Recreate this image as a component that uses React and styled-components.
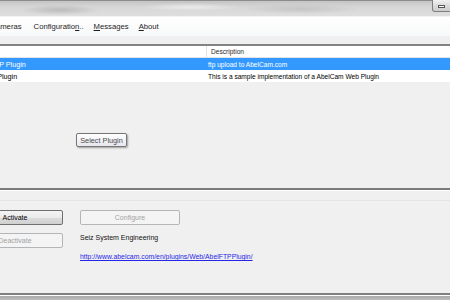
import styled, { createGlobalStyle } from "styled-components"

const GlobalStyle = createGlobalStyle`
    html, body {
        margin: 0;
        padding: 0;
        background: #f0f0f0;
    }
    body {
        font-family: "Liberation Sans", Arial, sans-serif;
        overflow: hidden;
    }
`

const Window = styled.div`
    width: 450px;
    height: 300px;
    overflow: hidden;
    display: flex;
    flex-direction: column;
    background: #f0f0f0;
`

const TitleBar = styled.div`
    height: 15px;
    flex-shrink: 0;
    display: flex;
    justify-content: flex-end;
    border-top: 1px solid #8c8c8c;
    background:
        radial-gradient(ellipse 40px 5px at 60px 9px, rgba(150, 150, 150, 0.45), transparent),
        radial-gradient(ellipse 50px 4px at 190px 6px, rgba(255, 255, 255, 0.5), transparent),
        radial-gradient(ellipse 60px 5px at 300px 8px, rgba(160, 160, 160, 0.35), transparent),
        linear-gradient(#c4c4c4, #d7d7d7 40%, #dedede);
`

const MinButton = styled.div`
    width: 24px;
    height: 12px;
    margin-right: -6px;
    margin-top: -1px;
    border: 1px solid #7e7e7e;
    border-top: none;
    border-bottom-left-radius: 3px;
    background: linear-gradient(#f2f2f2, #dcdcdc 50%, #cdcdcd);
    display: flex;
    align-items: flex-end;
    padding: 0 0 3px 5px;
    box-sizing: border-box;
    span {
        display: block;
        width: 7px;
        height: 3px;
        box-sizing: border-box;
        border: 1px solid #555;
        background: #fff;
    }
`

const Body = styled.div`
    flex: 1;
    display: flex;
    flex-direction: column;
    margin-left: -37px;
    width: 487px;
    min-height: 0;
`

const MenuBar = styled.div`
    height: 19px;
    flex-shrink: 0;
    display: flex;
    align-items: center;
    gap: 10px;
    padding-left: 5px;
    background: linear-gradient(#ffffff, #f7f8f9);
    border-top: 1px solid #f4f4f4;
    font-size: 7.7px;
    color: #1e1e1e;
`

const MenuItem = styled.span`
    margin-right: ${p => p.$extra || 0}px;
    u {
        text-decoration: underline;
    }
`

const Gap = styled.div`
    height: 8px;
    flex-shrink: 0;
`

const List = styled.div`
    border-top: 2px solid #838383;
    background: #ffffff;
    font-size: 6.6px;
    color: #111;
    flex-shrink: 0;
`

const Row = styled.div`
    display: grid;
    grid-template-columns: 244px 1fr;
    height: ${p => (p.$header ? "11px" : "12px")};
    align-items: center;
    background: ${p => (p.$selected ? "#3399ff" : "#ffffff")};
    color: ${p => (p.$selected ? "#ffffff" : p.$header ? "#2b2b2b" : "#000")};
    border-bottom: ${p => (p.$header ? "1px solid #e3e3e3" : "none")};
`

const Cell = styled.div`
    height: 100%;
    display: flex;
    align-items: center;
    padding-left: ${p => p.$pad || 4}px;
    white-space: nowrap;
    overflow: hidden;
    border-right: ${p => (p.$divider ? "1px solid #e3e3e3" : "none")};
    box-sizing: border-box;
`

const NameCell = styled(Cell)`
    font-size: 7.2px;
`

const EmptyArea = styled.div`
    flex: 1;
    position: relative;
    background: #f0f0f0;
`

const Tooltip = styled.div`
    position: absolute;
    left: 113px;
    top: 51px;
    width: 51px;
    height: 14px;
    box-sizing: border-box;
    border: 1px solid #767676;
    border-radius: 2px;
    background: linear-gradient(#ffffff, #e6e7ef);
    box-shadow: 1px 1px 2px rgba(0, 0, 0, 0.35);
    font-size: 7.3px;
    color: #4a4a4a;
    display: flex;
    align-items: center;
    justify-content: center;
`

const Separator = styled.div`
    height: 2px;
    flex-shrink: 0;
    background: #7b7b7b;
    border-bottom: 1px solid #ffffff;
`

const Panel = styled.div`
    height: 102px;
    flex-shrink: 0;
    display: flex;
    flex-direction: column;
`

const PanelTop = styled.div`
    height: 9px;
    border-bottom: 1px solid #e2e7e2;
`

const PanelGrid = styled.div`
    display: grid;
    grid-template-columns: 96px 1fr;
    column-gap: 17px;
    row-gap: 8px;
    padding-top: 9px;
    padding-left: 4px;
    font-size: 7px;
    color: #111;
`

const Button = styled.div`
    width: ${p => (p.$wide ? "100px" : "96px")};
    height: 15px;
    box-sizing: border-box;
    border: 1px solid ${p => (p.disabled ? "#b3b6b8" : "#707070")};
    border-radius: 2px;
    background: ${p => (p.disabled
        ? "#f4f4f4"
        : "linear-gradient(#f3f3f3, #ebebeb 50%, #dddddd 50%, #cfcfcf)")};
    color: ${p => (p.disabled ? "#a3a3a3" : "#000")};
    font-size: 7px;
    display: flex;
    align-items: center;
    justify-content: center;
`

const Info = styled.div`
    display: flex;
    flex-direction: column;
    gap: 11px;
    padding-top: 1px;
`

const Company = styled.div`
    height: 8px;
    line-height: 8px;
`

const Link = styled.a`
    color: #2626e8;
    text-decoration: underline;
    font-size: 6.85px;
    white-space: nowrap;
`

const BottomEdge = styled.div`
    height: 5px;
    flex-shrink: 0;
    border-top: 2px solid #7f7f7f;
    background: linear-gradient(#ffffff 1px, #a9a9a9 1px, #bdbdbd);
`

function App() {
    return (
        <>
            <GlobalStyle />
            <Window>
                <TitleBar>
                    <MinButton><span /></MinButton>
                </TitleBar>
                <Body>
                    <MenuBar>
                        <MenuItem>File</MenuItem>
                        <MenuItem $extra={2}>Cameras</MenuItem>
                        <MenuItem>Configuratio<u>n</u>..</MenuItem>
                        <MenuItem><u>M</u>essages</MenuItem>
                        <MenuItem><u>A</u>bout</MenuItem>
                    </MenuBar>
                    <Gap />
                    <List>
                        <Row $header>
                            <Cell $divider $pad={18}>Name</Cell>
                            <Cell>Description</Cell>
                        </Row>
                        <Row $selected>
                            <NameCell $pad={13}>AbelFTP Plugin</NameCell>
                            <Cell $pad={1}>ftp upload to AbelCam.com</Cell>
                        </Row>
                        <Row>
                            <NameCell $pad={13}>Demo Plugin</NameCell>
                            <Cell $pad={1}>This is a sample implementation of a AbelCam Web Plugin</Cell>
                        </Row>
                    </List>
                    <EmptyArea>
                        <Tooltip>Select Plugin</Tooltip>
                    </EmptyArea>
                    <Separator />
                    <Panel>
                        <PanelTop />
                        <PanelGrid>
                            <Button>Activate</Button>
                            <Button $wide disabled>Configure</Button>
                            <Button disabled>Deactivate</Button>
                            <Info>
                                <Company>Seiz System Engineering</Company>
                                <Link href="#">http://www.abelcam.com/en/plugins/Web/AbelFTPPlugin/</Link>
                            </Info>
                        </PanelGrid>
                    </Panel>
                </Body>
                <BottomEdge />
            </Window>
        </>
    )
}

export default App
